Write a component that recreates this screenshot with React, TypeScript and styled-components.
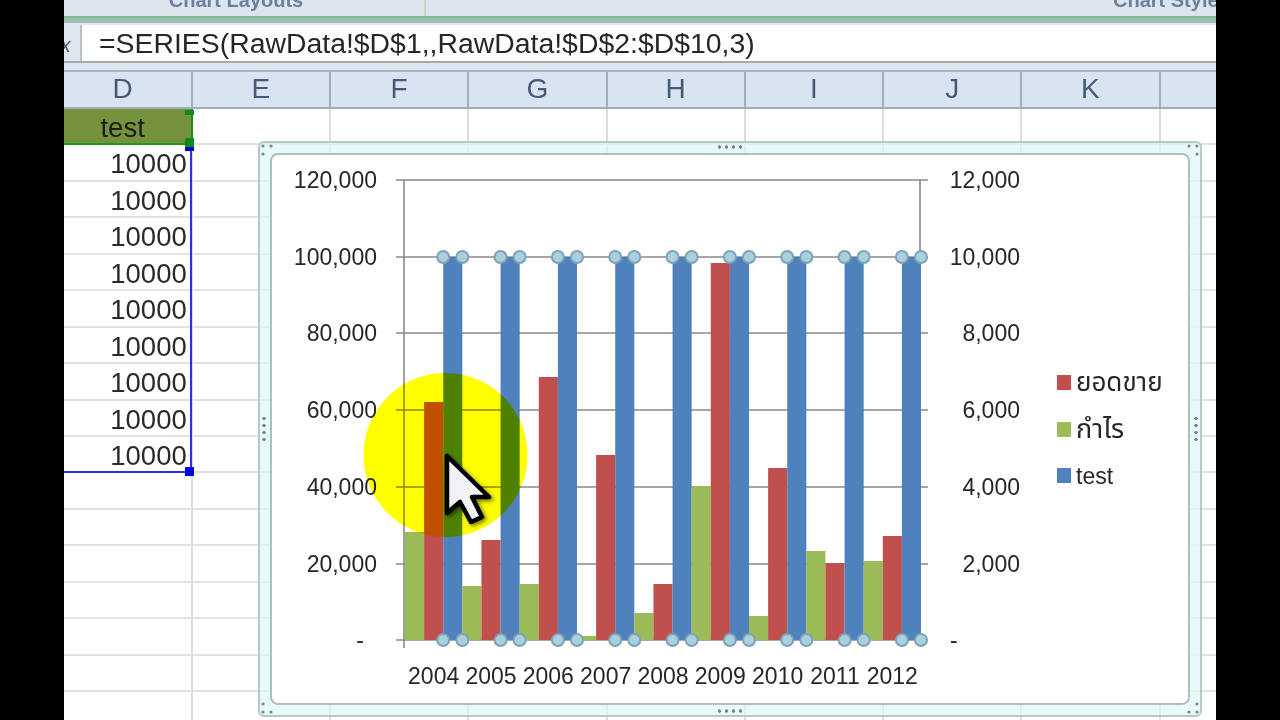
import styled, { createGlobalStyle } from "styled-components"

const GlobalStyle = createGlobalStyle`
  html, body {
    margin: 0;
    padding: 0;
    background: #000;
  }
  #root {
    width: 1280px;
    height: 720px;
    overflow: hidden;
  }
`

const columns = ["D", "E", "F", "G", "H", "I", "J", "K", ""]
const years = [2004, 2005, 2006, 2007, 2008, 2009, 2010, 2011, 2012]

// tops of the bars, in page pixels, read off the picture
const greenTops = [532, 586, 584, 636, 613, 486, 616, 551, 561]
const redTops = [402, 540, 377, 455, 584, 263, 468, 563, 536]
const blueTop = 257

const axisLeft = 404
const axisRight = 920
const axisBottom = 640
const barStart = 405
const barWidth = (axisRight - axisLeft) / 27

const leftLabels = ["120,000", "100,000", "80,000", "60,000", "40,000", "20,000", "-"]
const rightLabels = ["12,000", "10,000", "8,000", "6,000", "4,000", "2,000", "-"]
const gridY = [180, 257, 333, 410, 487, 564, 640]

const legend = [
  { color: "#c0504d", label: "ยอดขาย", size: 26, y: 391 },
  { color: "#9bbb59", label: "กำไร", size: 27, y: 438 },
  { color: "#4f81bd", label: "test", size: 23, y: 484 },
]

const Chart = () => (
  <ChartSvg viewBox="272 155 916 548">
    {gridY.map((y) => (
      <GridLine key={y} x1={396} x2={928} y1={y} y2={y} />
    ))}
    <GridLine x1={axisLeft} x2={axisLeft} y1={180} y2={648} />
    <GridLine x1={axisRight} x2={axisRight} y1={180} y2={640} />

    {years.map((year, i) => {
      const x = barStart + i * barWidth * 3
      return (
        <g key={year}>
          <rect x={x} y={greenTops[i]} width={barWidth} height={axisBottom - greenTops[i]} fill="#9bbb59" />
          <rect x={x + barWidth} y={redTops[i]} width={barWidth} height={axisBottom - redTops[i]} fill="#c0504d" />
          <rect x={x + barWidth * 2} y={blueTop} width={barWidth} height={axisBottom - blueTop} fill="#4f81bd" />
          <AxisText x={x + barWidth * 1.5} y={684} textAnchor="middle">{year}</AxisText>
        </g>
      )
    })}

    {years.map((year, i) => {
      const left = barStart + i * barWidth * 3 + barWidth * 2
      return [blueTop, axisBottom].map((y) =>
        [left, left + barWidth].map((x) => <BarHandle key={`${year}-${y}-${x}`} cx={x} cy={y} r={6} />),
      )
    })}

    {leftLabels.map((label, i) => (
      <AxisText key={label} x={i === 6 ? 364 : 377} y={gridY[i] + 8} textAnchor="end">{label}</AxisText>
    ))}
    {rightLabels.map((label, i) => (
      <AxisText key={label} x={i === 6 ? 950 : 1020} y={gridY[i] + 8} textAnchor={i === 6 ? "start" : "end"}>{label}</AxisText>
    ))}

    {legend.map((item) => (
      <g key={item.label}>
        <rect x={1057} y={item.y - 16} width={14} height={15} fill={item.color} />
        <AxisText x={1076} y={item.y} $size={item.size}>{item.label}</AxisText>
      </g>
    ))}

    <Spotlight cx={445.5} cy={455} r={82} />
    <Pointer d="M447 456 L447 513 L460 502 L471 522 L482 517 L472 497 L489 497 Z" />
  </ChartSvg>
)

const CornerDots = ({ corner }: { corner: "tl" | "tr" | "bl" | "br" }) => (
  <CornerGrip $corner={corner} viewBox="0 0 12 12">
    <circle cx="2" cy="2" r="1.6" />
    <circle cx="10" cy="2" r="1.6" />
    <circle cx="2" cy="10" r="1.6" />
  </CornerGrip>
)

export default function App() {
  return (
    <>
      <GlobalStyle />
      <Screen>
        <Main>
          <Ribbon>
            <RibbonGroup $width={362}>Chart Layouts</RibbonGroup>
            <RibbonLast>Chart Styles</RibbonLast>
          </Ribbon>
          <RibbonEdge />
          <FormulaRow>
            <FxBox>fx</FxBox>
            <FormulaInput>=SERIES(RawData!$D$1,,RawData!$D$2:$D$10,3)</FormulaInput>
          </FormulaRow>
          <Sheet>
            <Columns>
              {columns.map((c, i) => (
                <ColumnHead key={i}>{c}</ColumnHead>
              ))}
            </Columns>
            <Cells>
              {Array.from({ length: 17 * 9 }).map((_, i) => {
                const row = Math.floor(i / 9)
                const col = i % 9
                if (col === 0 && row === 0) return <TitleCell key={i}>test</TitleCell>
                if (col === 0 && row < 10) return <Cell key={i}>10000</Cell>
                return <Cell key={i} />
              })}
            </Cells>
            <DataOutline />
            <GreenHandle $top={47} $height={5} />
            <GreenHandle $top={75} $height={9} />
            <BlueHandle $top={84} $height={4} />
            <BlueHandle $top={404} $height={9} />
            <ChartFrame>
              <ChartPanel>
                <Chart />
              </ChartPanel>
              <EdgeGrip $side="top" />
              <EdgeGrip $side="bottom" />
              <EdgeGrip $side="left" />
              <EdgeGrip $side="right" />
              <CornerDots corner="tl" />
              <CornerDots corner="tr" />
              <CornerDots corner="bl" />
              <CornerDots corner="br" />
            </ChartFrame>
          </Sheet>
        </Main>
      </Screen>
    </>
  )
}

const Screen = styled.div`
  width: 1280px;
  height: 720px;
  background: #000;
  display: flex;
  justify-content: center;
  overflow: hidden;
`

const Main = styled.div`
  width: 1152px;
  height: 720px;
  background: #fff;
  display: flex;
  flex-direction: column;
  overflow: hidden;
  filter: blur(0.7px);
  font-family: "Liberation Sans", Arial, sans-serif;
`

const Ribbon = styled.div`
  height: 16px;
  flex: none;
  display: flex;
  background: #dce5ee;
  overflow: hidden;
`

const RibbonGroup = styled.div<{ $width: number }>`
  width: ${(p) => p.$width}px;
  flex: none;
  box-sizing: border-box;
  border-right: 2px solid #c3d6c8;
  padding-right: 16px;
  text-align: center;
  font-size: 20px;
  font-weight: bold;
  line-height: 22px;
  margin-top: -11px;
  color: #6b7f9e;
  white-space: nowrap;
`

const RibbonLast = styled.div`
  padding-left: 687px;
  font-size: 20px;
  font-weight: bold;
  line-height: 22px;
  margin-top: -11px;
  color: #6b7f9e;
  white-space: nowrap;
`

const RibbonEdge = styled.div`
  height: 7px;
  flex: none;
  background: linear-gradient(#7fb592, #9cc4aa 55%, #a9b4bc);
`

const FormulaRow = styled.div`
  height: 40px;
  flex: none;
  display: flex;
  box-sizing: border-box;
  padding-top: 2px;
  background: #dde6f1;
  border-bottom: 2px solid #a6aaa8;
`

const FxBox = styled.div`
  width: 16px;
  flex: none;
  border-right: 2px solid #b9c0c8;
  overflow: hidden;
  font-size: 20px;
  line-height: 40px;
  font-style: italic;
  color: #555;
  text-indent: -9px;
`

const FormulaInput = styled.div`
  flex: 1;
  background: #fff;
  padding-left: 17px;
  font-size: 28.4px;
  line-height: 37px;
  color: #262626;
  white-space: nowrap;
`

const Sheet = styled.div`
  flex: 1;
  position: relative;
  padding-top: 7px;
  background: linear-gradient(#dce6f1 7px, #fff 7px);
  overflow: hidden;
`

const Columns = styled.div`
  display: grid;
  grid-template-columns: repeat(9, 138.25px);
  margin-left: -9.5px;
  height: 39px;
  box-sizing: border-box;
  background: #d9e4f3;
  border-top: 2px solid #a9b3c0;
  border-bottom: 2px solid #a3acbb;
`

const ColumnHead = styled.div`
  border-right: 2px solid #a3acbb;
  text-align: center;
  font-size: 28px;
  line-height: 34px;
  color: #465a78;
`

const Cells = styled.div`
  display: grid;
  grid-template-columns: repeat(9, 138.25px);
  grid-auto-rows: 36.45px;
  margin-left: -9.5px;
`

const Cell = styled.div`
  box-sizing: border-box;
  border-right: 2px solid #dcdcdc;
  border-bottom: 2px solid #e2e2e2;
  text-align: right;
  padding-right: 4px;
  font-size: 27.5px;
  line-height: 38px;
  color: #2a2a2a;
`

const TitleCell = styled(Cell)`
  background: #76923c;
  border-bottom: 2px solid #1f9a1f;
  border-right: 2px solid #1f8a1f;
  text-align: center;
  padding: 0;
  line-height: 37px;
  color: #1c1c10;
`

const DataOutline = styled.div`
  position: absolute;
  left: -2px;
  top: 84px;
  width: 130px;
  height: 326px;
  box-sizing: border-box;
  border-right: 2px solid #3030d8;
  border-bottom: 2px solid #3030d8;
`

const GreenHandle = styled.div<{ $top: number; $height: number }>`
  position: absolute;
  left: 121px;
  top: ${(p) => p.$top}px;
  width: 9px;
  height: ${(p) => p.$height}px;
  background: #0d8a1c;
`

const BlueHandle = styled.div<{ $top: number; $height: number }>`
  position: absolute;
  left: 121px;
  top: ${(p) => p.$top}px;
  width: 9px;
  height: ${(p) => p.$height}px;
  background: #0000e0;
`

const ChartFrame = styled.div`
  position: absolute;
  left: 194px;
  top: 78px;
  width: 944px;
  height: 576px;
  box-sizing: border-box;
  padding: 10px;
  border: 2px solid #b6c9c9;
  border-radius: 6px;
  background: rgba(222, 246, 246, 0.72);
`

const ChartPanel = styled.div`
  width: 100%;
  height: 100%;
  box-sizing: border-box;
  border: 2px solid #aebfc0;
  border-radius: 8px;
  background: #fff;
  overflow: hidden;
`

const ChartSvg = styled.svg`
  display: block;
  width: 100%;
  height: 100%;
`

const GridLine = styled.line`
  stroke: #8a8a8a;
  stroke-width: 1.6;
`

const AxisText = styled.text<{ $size?: number }>`
  font-family: "Liberation Sans", "Noto Sans Thai", "Noto Sans", sans-serif;
  font-size: ${(p) => p.$size ?? 23}px;
  fill: #262626;
`

const BarHandle = styled.circle`
  fill: #a9d0dc;
  stroke: #7da3b5;
  stroke-width: 2;
`

const Spotlight = styled.circle`
  fill: #ffff00;
  mix-blend-mode: multiply;
`

const Pointer = styled.path`
  fill: #f2f2f8;
  stroke: #000;
  stroke-width: 4.5px;
  stroke-linejoin: round;
  filter: drop-shadow(2px 2px 2px rgba(0, 0, 0, 0.55));
`

const EdgeGrip = styled.div<{ $side: "top" | "bottom" | "left" | "right" }>`
  position: absolute;
  background-image: radial-gradient(circle, #758a8b 1.5px, transparent 1.9px);
  ${(p) =>
    p.$side === "top" || p.$side === "bottom"
      ? `width: 28px; height: 6px; background-size: 7px 6px; left: 456px;`
      : `width: 6px; height: 28px; background-size: 6px 7px; top: 272px;`}
  ${(p) => p.$side === "top" && "top: 1px;"}
  ${(p) => p.$side === "bottom" && "bottom: 1px;"}
  ${(p) => p.$side === "left" && "left: 1px;"}
  ${(p) => p.$side === "right" && "right: 1px;"}
`

const CornerGrip = styled.svg<{ $corner: "tl" | "tr" | "bl" | "br" }>`
  position: absolute;
  width: 12px;
  height: 12px;
  fill: #758a8b;
  ${(p) => (p.$corner[0] === "t" ? "top: 1px;" : "bottom: 1px;")}
  ${(p) => (p.$corner[1] === "l" ? "left: 1px;" : "right: 1px;")}
  transform: scale(${(p) => (p.$corner[1] === "l" ? 1 : -1)}, ${(p) => (p.$corner[0] === "t" ? 1 : -1)});
`
